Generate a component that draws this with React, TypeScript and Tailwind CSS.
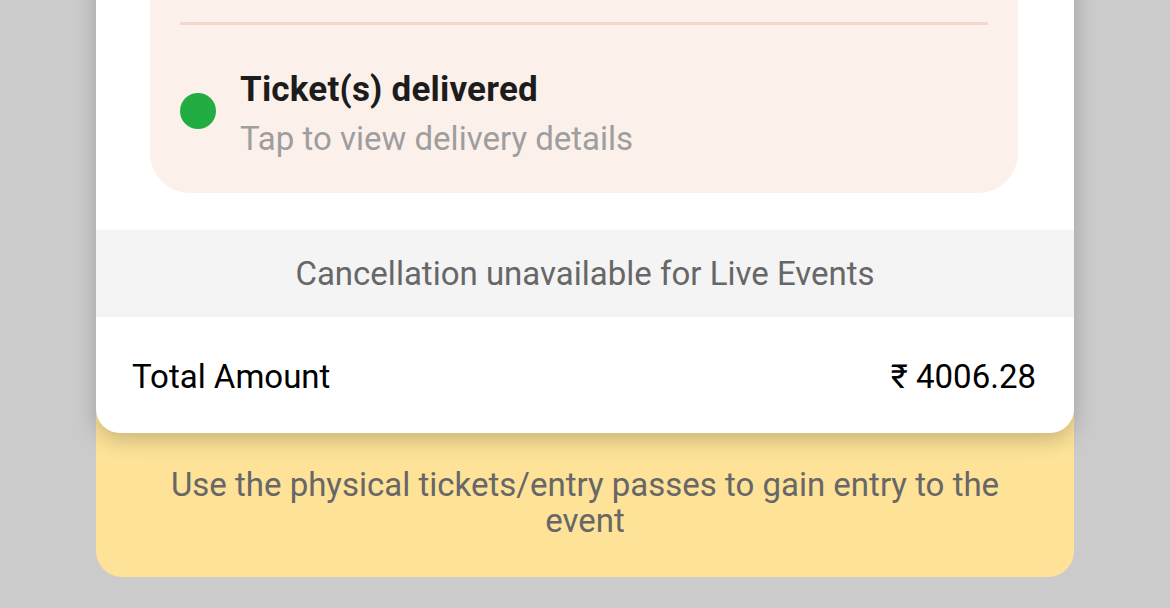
export default function App() {
  return (
    <div
      className="h-[608px] w-[1170px] overflow-hidden bg-[#cbcbcb] px-[96px]"
      style={{ fontFamily: "Roboto, 'Noto Sans', sans-serif" }}
    >
      <div className="relative z-10 -mt-[80px] rounded-[24px] bg-white shadow-[0_6px_22px_rgba(0,0,0,0.22)]">
        <div className="pl-[54px] pr-[56px]">
          <div className="rounded-b-[40px] bg-[#fcf0eb] px-[30px] pb-[34px] pt-[102px]">
            <div className="h-[3px] bg-[#f5d6cc]" />
            <div className="mt-[43px] flex items-center gap-[24px]">
              <div className="mb-[5px] h-[36px] w-[36px] shrink-0 rounded-full bg-[#22ad43]" />
              <div>
                <div className="text-[35px] font-bold leading-[44px] tracking-[0.2px] text-[#1c1c1c]">
                  Ticket(s) delivered
                </div>
                <div className="mt-[7px] text-[33px] leading-[40px] text-[#9e9e9e]">
                  Tap to view delivery details
                </div>
              </div>
            </div>
          </div>
        </div>
        <div className="mt-[37px] flex h-[87px] items-center justify-center bg-[#f4f4f4] text-[33px] text-[#676767]">
          Cancellation unavailable for Live Events
        </div>
        <div className="flex h-[116px] items-center justify-between pl-[36px] pr-[38px] pt-[3px] text-[33px] text-black">
          <span>Total Amount</span>
          <span>₹ 4006.28</span>
        </div>
      </div>
      <div className="-mt-[40px] rounded-b-[26px] bg-[#fde298] px-[60px] pb-[38px] pt-[74px] text-center text-[33px] leading-[36px] text-[#676767]">
        Use the physical tickets/entry passes to gain entry to the event
      </div>
    </div>
  );
}
